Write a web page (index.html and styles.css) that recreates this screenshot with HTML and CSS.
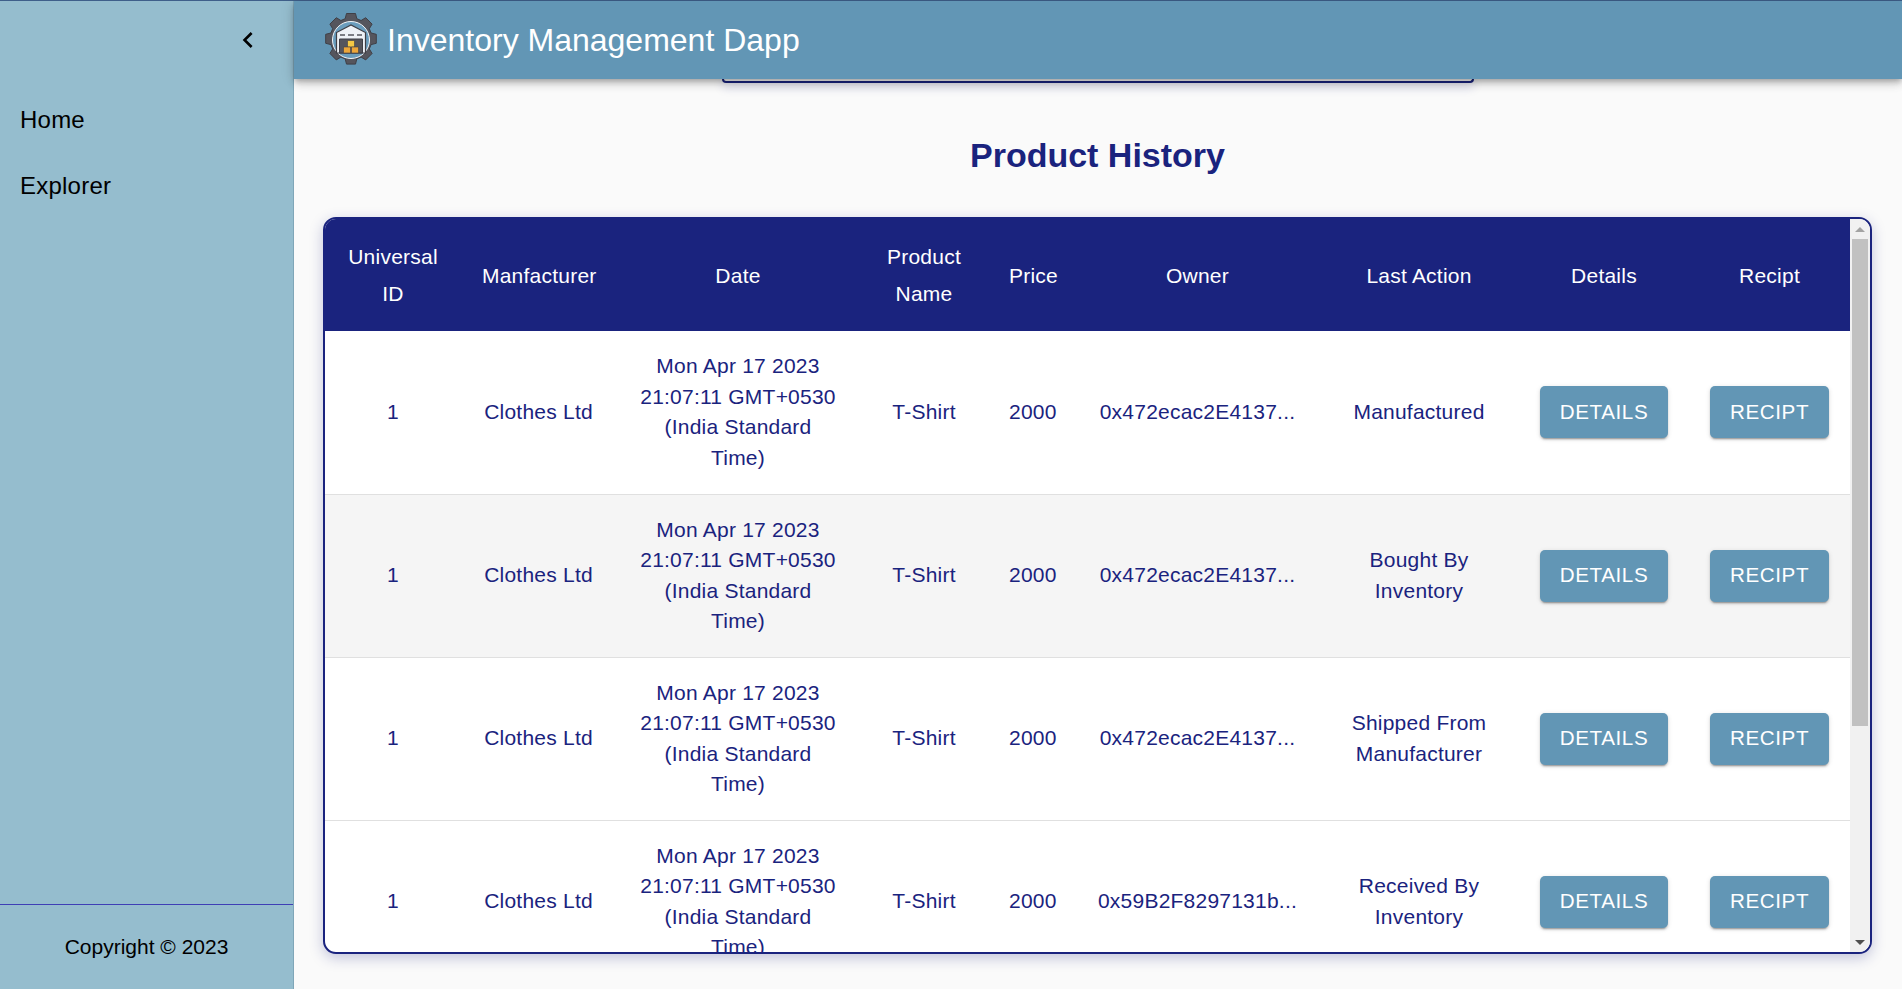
FILE: index.html
```html
<!DOCTYPE html>
<html lang="en">
<head>
<meta charset="utf-8">
<title>Inventory Management Dapp</title>
<link rel="stylesheet" href="styles.css">
</head>
<body>
<div class="app">
  <aside class="sidebar">
    <div class="side-top">
      <svg class="chevron" viewBox="0 0 24 24"><path d="M15.41 7.41 14 6l-6 6 6 6 1.41-1.41L10.83 12z"/></svg>
    </div>
    <nav class="nav">
      <a class="nav-item">Home</a>
      <a class="nav-item">Explorer</a>
    </nav>
    <div class="side-foot">Copyright © 2023</div>
  </aside>
  <div class="main">
    <header class="topbar">
      <svg class="logo" viewBox="0 0 56 56">
        <g fill="#55555d" stroke="#3f3f46" stroke-width="1">
          <path d="M23.5 1.5h9l1.3 5.2 4.3 1.8 4.6-2.8 6.4 6.4-2.8 4.6 1.8 4.3 5.2 1.3v9l-5.2 1.3-1.8 4.3 2.8 4.6-6.4 6.4-4.6-2.8-4.3 1.8-1.3 5.2h-9l-1.3-5.2-4.3-1.8-4.6 2.8-6.4-6.4 2.8-4.6-1.8-4.3-5.2-1.3v-9l5.2-1.3 1.8-4.3-2.8-4.6 6.4-6.4 4.6 2.8 4.3-1.8z"/>
        </g>
        <circle cx="28" cy="28" r="18.5" fill="#6a9cbc" stroke="#f2f4f7" stroke-width="1"/>
        <path d="M13.5 41V20.5L28 13l14.5 7.5V41z" fill="#eef1f6" stroke="#3f3f46" stroke-width="1.2"/>
        <path d="M17 23h5M25 23h6M34 23h5" stroke="#55555d" stroke-width="1.6"/>
        <path d="M16.5 27h23v14h-23z" fill="#55555d" stroke="#3f3f46" stroke-width="1"/>
        <path d="M24.5 28.5h7v6.5h-7z" fill="#f6c945" stroke="#3f3f46" stroke-width=".6"/>
        <path d="M20.5 35h7v6h-7zM28.5 35h7v6h-7z" fill="#eda63a" stroke="#3f3f46" stroke-width=".6"/>
      </svg>
      <h1 class="brand">Inventory Management Dapp</h1>
    </header>
    <main class="content">
      <div class="peek"></div>
      <h2 class="title">Product History</h2>
      <section class="card">
        <div class="table-wrap">
          <table class="table">
            <colgroup>
              <col class="c1"><col class="c2"><col class="c3"><col class="c4"><col class="c5"><col class="c6"><col class="c7"><col class="c8"><col class="c9">
            </colgroup>
            <thead>
              <tr><th>Universal ID</th><th>Manfacturer</th><th>Date</th><th>Product Name</th><th>Price</th><th>Owner</th><th>Last Action</th><th>Details</th><th>Recipt</th></tr>
            </thead>
            <tbody>
              <tr>
                <td>1</td><td>Clothes Ltd</td><td>Mon Apr 17 2023 21:07:11 GMT+0530 (India Standard Time)</td><td>T-Shirt</td><td>2000</td><td>0x472ecac2E4137...</td><td>Manufactured</td>
                <td><button class="btn">Details</button></td><td><button class="btn">Recipt</button></td>
              </tr>
              <tr class="shade">
                <td>1</td><td>Clothes Ltd</td><td>Mon Apr 17 2023 21:07:11 GMT+0530 (India Standard Time)</td><td>T-Shirt</td><td>2000</td><td>0x472ecac2E4137...</td><td>Bought By Inventory</td>
                <td><button class="btn">Details</button></td><td><button class="btn">Recipt</button></td>
              </tr>
              <tr>
                <td>1</td><td>Clothes Ltd</td><td>Mon Apr 17 2023 21:07:11 GMT+0530 (India Standard Time)</td><td>T-Shirt</td><td>2000</td><td>0x472ecac2E4137...</td><td>Shipped From Manufacturer</td>
                <td><button class="btn">Details</button></td><td><button class="btn">Recipt</button></td>
              </tr>
              <tr>
                <td>1</td><td>Clothes Ltd</td><td>Mon Apr 17 2023 21:07:11 GMT+0530 (India Standard Time)</td><td>T-Shirt</td><td>2000</td><td>0x59B2F8297131b...</td><td>Received By Inventory</td>
                <td><button class="btn">Details</button></td><td><button class="btn">Recipt</button></td>
              </tr>
            </tbody>
          </table>
        </div>
        <div class="scrollbar">
          <span class="arrow-up"></span>
          <span class="thumb"></span>
          <span class="track"></span>
          <span class="arrow-down"></span>
        </div>
      </section>
    </main>
  </div>
</div>
</body>
</html>
```
FILE: styles.css
```css
* { box-sizing: border-box; }
html, body { margin: 0; height: 100%; overflow: hidden; }
body { font-family: "Liberation Sans", Arial, sans-serif; background: #fafafa; }
.app { display: flex; height: 989px; border-top: 1px solid #3f5f8a; }

.sidebar { width: 294px; flex: none; display: flex; flex-direction: column; background: #95bdce; border-right: 1px solid #7fa6b8; }
.side-top { height: 78px; display: flex; align-items: center; justify-content: flex-end; padding-right: 29px; }
.chevron { width: 32px; height: 32px; fill: #000; }
.nav { display: flex; flex-direction: column; flex: 1; padding-top: 8px; }
.nav-item { height: 66px; display: flex; align-items: center; padding-left: 20px; font-size: 24px; letter-spacing: .225px; color: #000; }
.side-foot { height: 85px; border-top: 1px solid #3f3fb5; display: flex; align-items: center; justify-content: center; font-size: 21px; color: #000; }

.main { flex: 1; min-width: 0; display: flex; flex-direction: column; }
.topbar { height: 78px; flex: none; position: relative; z-index: 2; display: flex; align-items: center; gap: 8px; padding-left: 29px; background: #6296b5; box-shadow: 0 3px 5px -1px rgba(0,0,0,.2), 0 5px 8px 0 rgba(0,0,0,.14), 0 1px 14px 0 rgba(0,0,0,.12); }
.logo { width: 56px; height: 56px; flex: none; }
.brand { margin: 0; font-size: 32px; font-weight: 400; color: #fff; }

.content { flex: 1; min-height: 0; padding: 0 30px 0 29px; display: flex; flex-direction: column; align-items: center; }
.peek { width: 752px; height: 4px; flex: none; border: 2px solid #1a237e; border-top: 0; border-radius: 0 0 12px 12px; box-shadow: 0 4px 10px rgba(26,35,126,.25); }
.title { margin: 47px 0 0; height: 87px; font-size: 34px; font-weight: 700; color: #1a237e; line-height: 50px; }
.card { width: 100%; height: 737px; flex: none; display: flex; background: #fff; border: 2px solid #1a237e; border-radius: 13px; overflow: hidden; box-shadow: 0 6px 16px rgba(26,35,126,.22); }
.card { box-shadow: 0 4px 14px rgba(26,35,126,.25); }

.table-wrap { flex: 1; min-width: 0; overflow: hidden; }
.table { width: 100%; border-collapse: collapse; table-layout: fixed; font-size: 21px; letter-spacing: .225px; color: #1a237e; text-align: center; }
.c1 { width: 136px; } .c2 { width: 155px; } .c3 { width: 244px; } .c4 { width: 128px; } .c5 { width: 88px; }
.c6 { width: 243px; } .c7 { width: 200px; } .c8 { width: 170px; } .c9 { width: 161px; }
.table th { height: 112px; padding: 10px 21px; background: #1a237e; color: #fff; font-weight: 400; line-height: 37px; }
.table td { height: 163px; padding: 10px 21px; line-height: 30.5px; border-bottom: 1px solid #e0e0e0; }
.shade td { background: #f5f5f5; }

.btn { height: 52px; padding: 0; width: 100%; border: 0; border-radius: 5px; background: #6296b5; color: #fff; font: inherit; font-size: 20.6px; letter-spacing: .6px; text-transform: uppercase; box-shadow: 0 3px 1px -2px rgba(0,0,0,.2), 0 2px 2px 0 rgba(0,0,0,.14), 0 1px 5px 0 rgba(0,0,0,.12); }

.scrollbar { width: 20px; flex: none; display: flex; flex-direction: column; align-items: center; background: #f1f1f1; }
.arrow-up, .arrow-down { height: 20px; flex: none; display: flex; align-items: center; justify-content: center; }
.arrow-up::before { content: ""; border: 5px solid transparent; border-top: 0; border-bottom: 5px solid #a3a3a3; }
.arrow-down::before { content: ""; border: 5px solid transparent; border-bottom: 0; border-top: 5px solid #505050; }
.thumb { width: 16px; height: 487px; flex: none; background: #c1c1c1; }
.track { flex: 1; }
```
